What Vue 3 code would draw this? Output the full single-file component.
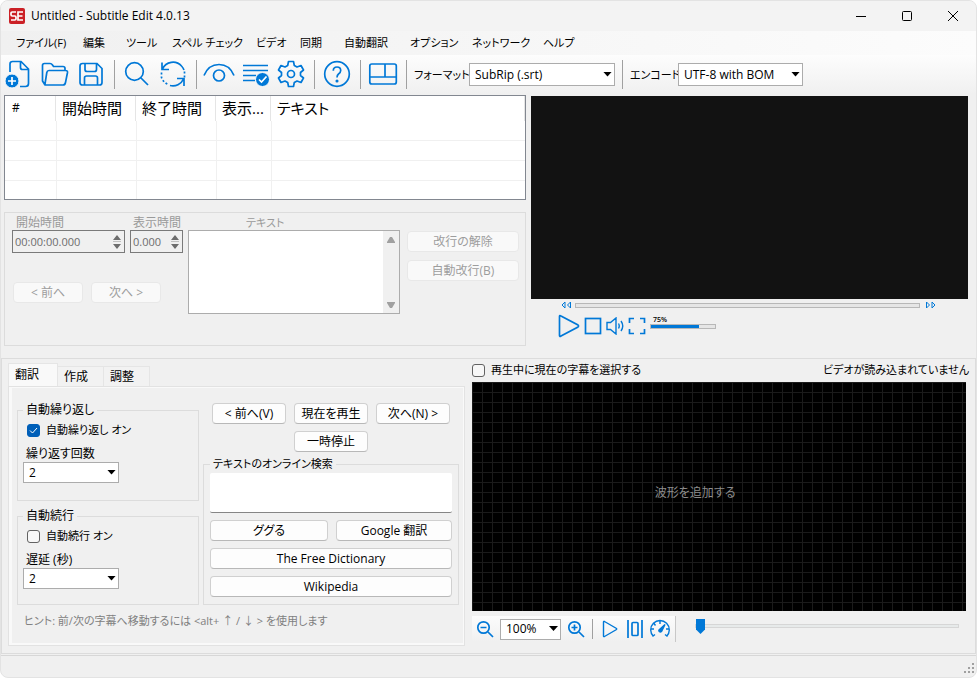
<script setup>
import { ref } from 'vue'

const menus = ['ファイル(F)', '編集', 'ツール', 'スペル チェック', 'ビデオ', '同期', '自動翻訳', 'オプション', 'ネットワーク', 'ヘルプ']
const columns = ['#', '開始時間', '終了時間', '表示...', 'テキスト']
const tabs = ['翻訳', '作成', '調整']
const activeTab = ref(0)
const format = ref('SubRip (.srt)')
const encoding = ref('UTF-8 with BOM')
const repeatOn = ref(true)
const continueOn = ref(false)
const selectWhilePlaying = ref(false)
const repeatCount = ref('2')
const delay = ref('2')
const zoom = ref('100%')
const volume = ref(75)
const seek = ref(0)
const wavePosition = ref(0)
const query = ref('')
</script>

<template>
  <div class="window">
    <header class="titlebar">
      <svg class="logo" width="16" height="16" viewBox="0 0 16 16" aria-hidden="true">
        <rect width="16" height="16" rx="2" fill="#cb2026" />
        <path d="M7 4H3.200Q2 4 2 5.200V6.800Q2 8 3.200 8H5.800Q7 8 7 9.200V10.800Q7 12 5.800 12H2M14 4H9V12H14M9 8H13.500" fill="none" stroke="#fff" stroke-width="1.700" />
      </svg>
      <h1>Untitled - Subtitle Edit 4.0.13</h1>
      <div class="caption-buttons">
        <button type="button" aria-label="最小化"><svg width="12" height="12" viewBox="0 0 12 12"><path d="M1 6.500H11" /></svg></button>
        <button type="button" aria-label="最大化"><svg width="12" height="12" viewBox="0 0 12 12"><rect x="1.500" y="1.500" width="9" height="9" rx="1" /></svg></button>
        <button type="button" aria-label="閉じる"><svg width="12" height="12" viewBox="0 0 12 12"><path d="M1 1L11 11M11 1L1 11" /></svg></button>
      </div>
    </header>

    <nav class="menubar">
      <button v-for="m in menus" :key="m" type="button">{{ m }}</button>
    </nav>

    <div class="toolbar">
      <button type="button" aria-label="新規">
        <svg class="ico" width="30" height="30" viewBox="0 0 30 30">
          <path d="M7 13V5Q7 2.500 9.500 2.500H18L25.500 10V24.500Q25.500 27.500 22.500 27.500H17M17.500 3V8.500Q17.500 10.500 19.500 10.500H25" />
          <circle cx="9" cy="22" r="7" class="solid edge" /><path d="M9 18V26M5 22H13" class="white" />
        </svg>
      </button>
      <button type="button" aria-label="開く">
        <svg class="ico" width="30" height="30" viewBox="0 0 30 30">
          <path d="M5 26L2.500 22V6.500Q2.500 4.500 4.500 4.500H10Q11.500 4.500 12.500 6L13.500 7.500H23Q25 7.500 25 9.500V11.500M5.500 26Q4.800 26 5 25L6.800 13.500Q7.200 11.500 9 11.500H25.500Q27.800 11.500 27.500 13.500L25.500 23.500Q25 26 23 26Z" />
        </svg>
      </button>
      <button type="button" aria-label="保存">
        <svg class="ico" width="30" height="30" viewBox="0 0 30 30">
          <path d="M6.500 4.500H21L26 9.500V23.500Q26 26 23.500 26H6.500Q4 26 4 23.500V7Q4 4.500 6.500 4.500ZM9 5V10.500Q9 12.500 11 12.500H18.500Q20.500 12.500 20.500 10.500V5M8.500 26V19Q8.500 17 10.500 17H19.500Q21.500 17 21.500 19V26" />
        </svg>
      </button>
      <span class="sep" />
      <button type="button" aria-label="検索">
        <svg class="ico" width="30" height="30" viewBox="0 0 30 30"><circle cx="12.500" cy="12.500" r="8.800" /><path d="M19 19L26 26" /></svg>
      </button>
      <button type="button" aria-label="置換">
        <svg class="ico" width="30" height="30" viewBox="0 0 30 30">
          <path d="M4.500 10A11.500 11.500 0 0 1 23.500 7Q25 8.500 26 11M4 3.500V10.500H11M25.500 20A11.500 11.500 0 0 1 12 26.500M26 27V19.500H19" />
          <path d="M26.500 12.500V18.500M3.500 13.500V18.500Q5 23 10 25.500" class="dots" />
        </svg>
      </button>
      <span class="sep" />
      <button type="button" aria-label="外観の比較">
        <svg class="ico" width="34" height="30" viewBox="0 0 34 30"><path d="M2 16.500Q6.500 5.500 17 5.500T32 16.500" /><circle cx="17" cy="16.500" r="5.500" /></svg>
      </button>
      <button type="button" aria-label="スペルチェック">
        <svg class="ico" width="30" height="30" viewBox="0 0 30 30">
          <path d="M3 6.500H28M3 11.500H28M3 16.500H16M3 21.500H15" /><circle cx="22.500" cy="20.500" r="7" class="solid edge" /><path d="M19 20.500L21.500 23L26.500 17.500" class="white" />
        </svg>
      </button>
      <button type="button" aria-label="設定">
        <svg class="ico" width="30" height="30" viewBox="0 0 30 30">
          <path d="M12.500 2.500H17.500L18.300 6.500L21 8L25 6.500L27.500 11L24.500 13.500V16.500L27.500 19L25 23.500L21 22L18.300 23.500L17.500 27.500H12.500L11.700 23.500L9 22L5 23.500L2.500 19L5.500 16.500V13.500L2.500 11L5 6.500L9 8L11.700 6.500Z" stroke-linejoin="round" /><circle cx="15" cy="15" r="3.500" />
        </svg>
      </button>
      <span class="sep" />
      <button type="button" aria-label="ヘルプ">
        <svg class="ico" width="30" height="30" viewBox="0 0 30 30"><circle cx="15" cy="15" r="12.300" /><path d="M11.300 11.700Q11.300 8 15 8T18.700 11.500Q18.700 13.500 16.500 15Q15 16.200 15 18.500" /><circle cx="15" cy="22" r="0.700" class="solid" /></svg>
      </button>
      <span class="sep" />
      <button type="button" aria-label="レイアウト">
        <svg class="ico" width="30" height="30" viewBox="0 0 30 30"><rect x="1.800" y="5" width="26.500" height="20" rx="2" /><path d="M2 18H28M17 5V18" /></svg>
      </button>
      <span class="sep" />
      <label class="tool-label" for="format">フォーマット</label>
      <span class="combo format"><select id="format" v-model="format"><option>SubRip (.srt)</option></select></span>
      <span class="sep" />
      <label class="tool-label enc" for="encoding">エンコード</label>
      <span class="combo encoding"><select id="encoding" v-model="encoding"><option>UTF-8 with BOM</option></select></span>
    </div>

    <main class="upper">
      <div class="editor">
        <div class="list">
          <table>
            <colgroup><col class="c-num" /><col class="c-time" /><col class="c-time" /><col class="c-dur" /><col /></colgroup>
            <thead><tr><th v-for="c in columns" :key="c" scope="col">{{ c }}</th></tr></thead>
            <tbody><tr v-for="r in 4" :key="r"><td v-for="c in columns" :key="c" /></tr></tbody>
          </table>
        </div>

        <section class="edit-panel">
          <div class="times">
            <div class="time-fields">
              <div class="field start">
                <label for="start">開始時間</label>
                <div class="spin"><input id="start" type="text" value="00:00:00.000" disabled /><svg width="8" height="14" viewBox="0 0 8 14"><path d="M0 5L4 0L8 5ZM0 9H8L4 14Z" /><path d="M0 6.500H8" class="line" /></svg></div>
              </div>
              <div class="field duration">
                <label for="duration">表示時間</label>
                <div class="spin"><input id="duration" type="text" value="0.000" disabled /><svg width="8" height="14" viewBox="0 0 8 14"><path d="M0 5L4 0L8 5ZM0 9H8L4 14Z" /><path d="M0 6.500H8" class="line" /></svg></div>
              </div>
            </div>
            <div class="step-buttons">
              <button class="btn" type="button" disabled>&lt; 前へ</button>
              <button class="btn" type="button" disabled>次へ &gt;</button>
            </div>
          </div>
          <div class="field text-field">
            <label for="text">テキスト</label>
            <div class="text-frame">
              <textarea id="text" disabled />
              <div class="scroll">
                <svg width="8" height="6" viewBox="0 0 8 6"><path d="M0 6V5L3 0H5L8 5V6Z" /></svg>
                <svg width="8" height="6" viewBox="0 0 8 6"><path d="M0 0V1L3 6H5L8 1V0Z" /></svg>
              </div>
            </div>
          </div>
          <div class="break-buttons">
            <button class="btn" type="button" disabled>改行の解除</button>
            <button class="btn" type="button" disabled>自動改行(B)</button>
          </div>
        </section>
      </div>

      <section class="player">
        <div class="screen" />
        <div class="seek-row">
          <button type="button" aria-label="戻る"><svg class="ico thin" width="11" height="8" viewBox="0 0 11 8"><path d="M4 1V7L1 4ZM9.500 1V7L6.500 4Z" /></svg></button>
          <input v-model="seek" class="bar" type="range" min="0" max="100" aria-label="再生位置" :style="{ '--fill': seek + '%' }" />
          <button type="button" aria-label="進む"><svg class="ico thin" width="11" height="8" viewBox="0 0 11 8"><path d="M1.500 1V7L4.500 4ZM7 1V7L10 4Z" /></svg></button>
        </div>
        <div class="play-row">
          <button type="button" aria-label="再生"><svg class="ico" width="22" height="24" viewBox="0 0 22 24"><path d="M1.500 2.500Q1.500 1 3 2L20 11Q21 12 20 13L3 22Q1.500 23 1.500 21.500Z" /></svg></button>
          <button type="button" aria-label="停止"><svg class="ico" width="18" height="18" viewBox="0 0 18 18"><rect x="1.500" y="1.500" width="15" height="15" /></svg></button>
          <button type="button" aria-label="ミュート"><svg class="ico slim" width="18" height="18" viewBox="0 0 18 18"><path d="M1 5.500H4.500L10 1V17L4.500 12.500H1ZM12.500 6.500Q14 9 12.500 11.500M15 4Q18.500 9 15 14" /></svg></button>
          <button type="button" aria-label="全画面"><svg class="ico" width="18" height="18" viewBox="0 0 18 18"><path d="M1.500 6V1.500H6M12 1.500H16.500V6M16.500 12V16.500H12M6 16.500H1.500V12" /></svg></button>
          <div class="volume">
            <label for="volume">{{ volume }}%</label>
            <input id="volume" v-model="volume" class="bar" type="range" min="0" max="100" :style="{ '--fill': volume + '%' }" />
          </div>
        </div>
      </section>
    </main>

    <section class="lower">
      <div class="tab-control">
        <div class="tabs" role="tablist">
          <button v-for="(t, i) in tabs" :key="t" type="button" role="tab" :aria-selected="i === activeTab" :class="{ active: i === activeTab }" @click="activeTab = i">{{ t }}</button>
        </div>
        <div class="tab-page">
          <div class="page-grid">
            <div class="auto-col">
              <fieldset>
                <legend>自動繰り返し</legend>
                <label class="check"><input v-model="repeatOn" type="checkbox" /><svg v-if="repeatOn" width="9" height="7" viewBox="0 0 9 7"><path d="M1 3.500L3.500 6L8 1" /></svg>自動繰り返し オン</label>
                <label class="above" for="repeat">繰り返す回数</label>
                <span class="combo small"><select id="repeat" v-model="repeatCount"><option>2</option></select></span>
              </fieldset>
              <fieldset class="continue">
                <legend>自動続行</legend>
                <label class="check"><input v-model="continueOn" type="checkbox" />自動続行 オン</label>
                <label class="above" for="delay">遅延 (秒)</label>
                <span class="combo small"><select id="delay" v-model="delay"><option>2</option></select></span>
              </fieldset>
            </div>
            <div class="action-col">
              <div class="play-buttons">
                <button class="btn" type="button">&lt; 前へ(V)</button>
                <button class="btn" type="button">現在を再生</button>
                <button class="btn" type="button">次へ(N) &gt;</button>
                <button class="btn pause" type="button">一時停止</button>
              </div>
              <fieldset class="search">
                <legend>テキストのオンライン検索</legend>
                <textarea v-model="query" aria-label="検索する語句" />
                <div class="search-buttons">
                  <button class="btn" type="button">ググる</button>
                  <button class="btn" type="button">Google 翻訳</button>
                  <button class="btn wide" type="button">The Free Dictionary</button>
                  <button class="btn wide" type="button">Wikipedia</button>
                </div>
              </fieldset>
            </div>
          </div>
          <p class="hint">ヒント: 前/次の字幕へ移動するには &lt;alt+ ↑ / ↓ &gt; を使用します</p>
        </div>
      </div>

      <div class="wave-area">
        <div class="wave-head">
          <label class="check"><input v-model="selectWhilePlaying" type="checkbox" />再生中に現在の字幕を選択する</label>
          <span>ビデオが読み込まれていません</span>
        </div>
        <div class="waveform"><span>波形を追加する</span></div>
        <div class="wave-foot">
          <div class="wave-tools">
            <button type="button" aria-label="縮小"><svg class="ico" width="18" height="18" viewBox="0 0 18 18"><circle cx="7.500" cy="7.500" r="5.700" /><path d="M12 12L17 17M4.500 7.500H10.500" /></svg></button>
            <span class="combo zoom"><select v-model="zoom" aria-label="拡大率"><option>100%</option></select></span>
            <button type="button" aria-label="拡大"><svg class="ico" width="18" height="18" viewBox="0 0 18 18"><circle cx="7.500" cy="7.500" r="5.700" /><path d="M12 12L17 17M4.500 7.500H10.500M7.500 4.500V10.500" /></svg></button>
            <span class="sep" />
            <button type="button" aria-label="再生"><svg class="ico slim" width="18" height="18" viewBox="0 0 18 18"><path d="M2.500 2Q2.500 1 3.500 1.500L15.500 8.500Q16 9 15.500 9.500L3.500 16.500Q2.500 17 2.500 16Z" /></svg></button>
            <button type="button" aria-label="中央に固定"><svg class="ico" width="18" height="20" viewBox="0 0 18 20"><path d="M2 1V19M16 1V19" /><rect x="6" y="3.500" width="6" height="13" rx="1" /></svg></button>
            <button type="button" aria-label="再生速度"><svg class="ico slim" width="22" height="20" viewBox="0 0 22 20"><path d="M4.500 17.500A9.300 9.300 0 1 1 17.500 17.500M11 2V5M5 4.500L6.500 6.500M2 10H5M17 10H20M3.500 17.500L6 15.500M18.500 17.500L16 15.500" /><path d="M16 5.500L12.500 12.500Q11.500 13.500 10.500 12.800Q9.300 11.700 10.200 10.800Z" class="solid" /></svg></button>
          </div>
          <input v-model="wavePosition" class="position" type="range" min="0" max="100" aria-label="波形の位置" />
        </div>
      </div>
    </section>

    <footer class="statusbar">
      <svg width="11" height="11" viewBox="0 0 11 11" aria-hidden="true"><path d="M8 0h2v2h-2zM8 4h2v2h-2zM8 8h2v2h-2zM4 4h2v2h-2zM4 8h2v2h-2zM0 8h2v2h-2z" fill="#a0a0a0" /></svg>
    </footer>
  </div>
</template>

<style>
body {
  margin: 0;
  background: #fff;
}
</style>

<style scoped>
* {
  box-sizing: border-box;
}

.window {
  display: flex;
  flex-direction: column;
  min-height: 100vh;
  overflow: hidden;
  border: 1px solid #e3e3e3;
  border-radius: 8px;
  background: #f0f0f0;
  color: #000;
  font: 12px/16px "Open Sans", "Noto Sans CJK JP", sans-serif;
  font-feature-settings: "palt";
}

button,
input,
select,
textarea {
  margin: 0;
  padding: 0;
  border: 0;
  background: none;
  color: inherit;
  font: inherit;
  font-feature-settings: inherit;
}

button {
  display: flex;
  align-items: center;
  justify-content: center;
  white-space: nowrap;
}

label,
legend {
  white-space: nowrap;
}

.ico {
  flex: none;
  fill: none;
  stroke: #0078d7;
  stroke-width: 1.7;
}

.ico.slim {
  stroke-width: 1.4;
}

.ico.thin {
  stroke-width: 1;
}

.ico .solid {
  fill: #0078d7;
}

.ico .edge {
  stroke: #fafafa;
  stroke-width: 1;
}

.ico .white {
  stroke: #fff;
}

.ico .dots {
  stroke-dasharray: 2 2;
}

/* title and menu */
.titlebar {
  display: flex;
  align-items: center;
  height: 30px;
  padding-left: 8px;
  background: #f3f3f3;
}

.titlebar h1 {
  margin: 0 0 0 6px;
  font-size: 12px;
  font-weight: 400;
}

.caption-buttons {
  display: flex;
  margin-left: auto;
}

.caption-buttons button {
  width: 46px;
  height: 30px;
}

.caption-buttons svg {
  fill: none;
  stroke: #000;
}

.menubar {
  display: grid;
  grid-template-columns: 67px 43px 46px 84px 44px 44px 66px 62px 71px auto;
  height: 24px;
  padding-left: 15px;
  background: linear-gradient(to right, #f0f0f0, #fcfcfc);
  font-size: 11px;
}

.menubar button {
  justify-content: flex-start;
}

/* toolbar */
.toolbar {
  display: flex;
  align-items: center;
  height: 39px;
  background: linear-gradient(#fdfdfd, #f0f0f0);
}

.toolbar button {
  flex: none;
  width: 36px;
  height: 36px;
  padding-bottom: 2px;
}

.toolbar button:first-child {
  width: 34px;
  margin-right: 2px;
}

.sep {
  flex: none;
  width: 1px;
  height: 29px;
  margin: 0 4px 0 5px;
  background: #a0a0a0;
}

.tool-label {
  width: 58px;
  padding-left: 3px;
  font-size: 11px;
}

.tool-label.enc {
  width: 51px;
}

.combo {
  position: relative;
  display: block;
  flex: none;
}

.combo::after {
  position: absolute;
  top: 50%;
  right: 3px;
  width: 9px;
  height: 5px;
  margin-top: -3px;
  background: #000;
  clip-path: polygon(0 0, 100% 0, 50% 100%);
  content: "";
  pointer-events: none;
}

.combo select {
  display: block;
  width: 100%;
  height: 23px;
  padding-left: 5px;
  border: 1px solid #acacac;
  border-radius: 0;
  background: #fff;
  appearance: none;
}

.combo.format {
  width: 146px;
  margin-right: 2px;
}

.combo.encoding {
  width: 125px;
}

/* upper half */
.upper {
  display: grid;
  grid-template-columns: minmax(0, 522fr) minmax(0, 437fr);
  column-gap: 5px;
  padding: 1px 8px 12px 3px;
}

.list {
  height: 105px;
  overflow: hidden;
  border: 1px solid #828790;
  background: #fff;
}

.list table {
  width: 100%;
  border-collapse: separate;
  border-spacing: 0;
  table-layout: fixed;
}

.c-num {
  width: 51px;
}

.c-time {
  width: 80px;
}

.c-dur {
  width: 55px;
}

.list th {
  height: 25px;
  padding: 0 6px 2px;
  border-right: 1px solid #e5e5e5;
  font-size: 15px;
  font-weight: 400;
  line-height: 20px;
  text-align: left;
  white-space: nowrap;
}

.list th:first-child {
  padding-left: 7px;
  font-size: 12px;
}

.list td {
  height: 20px;
  padding: 0;
  border-bottom: 1px solid #f0f0f0;
}

.list td + td {
  border-left: 1px solid #f0f0f0;
}

.edit-panel {
  display: flex;
  height: 134px;
  margin-top: 12px;
  padding: 2px 6px 0 7px;
  border: 1px solid #dcdcdc;
  color: #9a9a9a;
}

.field label {
  display: block;
  height: 15px;
  padding-left: 4px;
}

.time-fields {
  display: flex;
  gap: 5px;
}

.field.start {
  width: 113px;
}

.field.duration {
  width: 53px;
}

.field.duration label {
  padding-left: 3px;
}

.spin {
  display: flex;
  align-items: center;
  height: 23px;
  padding: 0 3px 0 2px;
  border: 1px solid #7a7a7a;
  color: #6d6d6d;
  font-size: 11px;
}

.spin input {
  flex: 1;
  min-width: 0;
}

.spin svg {
  flex: none;
  fill: #6d6d6d;
}

.spin .line {
  stroke: #c0c0c0;
}

.step-buttons {
  display: flex;
  gap: 8px;
  margin-top: 29px;
  padding-left: 1px;
}

.step-buttons .btn {
  width: 70px;
}

.text-field {
  flex: 1;
  min-width: 0;
  margin-left: 5px;
}

.text-field label {
  padding-left: 58px;
  font-size: 11px;
}

.text-frame {
  display: flex;
  height: 84px;
  border: 1px solid #acacac;
  background: #fff;
}

.text-frame textarea {
  flex: 1;
  min-width: 0;
  resize: none;
}

.scroll {
  display: flex;
  flex-direction: column;
  align-items: center;
  justify-content: space-between;
  width: 16px;
  padding: 6px 0 5px;
  background: #f0f0f0;
}

.scroll svg {
  fill: #a0a0a0;
}

.break-buttons {
  display: flex;
  flex-direction: column;
  gap: 8px;
  width: 112px;
  margin: 16px 0 0 7px;
}

.btn {
  height: 21px;
  border: 1px solid #d0d0d0;
  border-bottom-color: #b8b8b8;
  border-radius: 4px;
  background: #fdfdfd;
}

.btn:disabled {
  border-color: #e8e8e8;
  background: #f9f9f9;
  color: #9d9d9d;
}

/* player */
.player {
  display: flex;
  flex-direction: column;
}

.screen {
  flex: none;
  height: 203px;
  margin-top: 1px;
  background: #121212;
}

.bar {
  height: 5px;
  border: 1px solid #b8b8b8;
  background: linear-gradient(to right, #0078d7 var(--fill), #e6e6e6 var(--fill));
  appearance: none;
}

.bar::-webkit-slider-thumb {
  width: 1px;
  height: 3px;
  opacity: 0;
  appearance: none;
}

.seek-row {
  display: flex;
  align-items: center;
  gap: 3px;
  height: 12px;
  padding: 0 32px 0 30px;
}

.seek-row .bar {
  flex: 1;
  min-width: 0;
  margin-right: 2px;
}

.play-row {
  display: flex;
  align-items: center;
  gap: 4px;
  height: 29px;
  padding-left: 27px;
}

.volume {
  display: flex;
  flex-direction: column;
  width: 66px;
  padding-bottom: 8px;
}

.volume label {
  padding-left: 3px;
  font-size: 7px;
  font-weight: 600;
  line-height: 9px;
}

.volume .bar {
  width: 100%;
}

/* lower half */
.lower {
  display: flex;
  flex: 1;
  gap: 7px;
  padding: 4px 9px 7px 6px;
  border: 1px solid #dcdcdc;
}

.tab-control {
  display: flex;
  flex: none;
  flex-direction: column;
  width: 457px;
}

.tabs {
  display: flex;
  align-items: flex-end;
  height: 23px;
}

.tabs button {
  justify-content: flex-start;
  width: 46px;
  height: 20px;
  padding-left: 6px;
  border: 1px solid #e5e5e5;
  border-width: 1px 1px 0 0;
  background: #f2f2f2;
}

.tabs .active {
  width: 50px;
  height: 23px;
  padding-bottom: 1px;
  border-left-width: 1px;
  background: #f9f9f9;
}

.tab-page {
  flex: 1;
  padding: 14px 5px 4px;
  border: 1px solid #e2e2e2;
  box-shadow: inset 3px -2px #f9f9f9, inset -1px 1px #f9f9f9;
}

.page-grid {
  display: grid;
  grid-template-columns: 182px 256px;
  gap: 4px;
  padding-left: 3px;
}

.auto-col {
  display: flex;
  flex-direction: column;
  gap: 6px;
}

fieldset {
  min-width: 0;
  height: 100px;
  margin: 0;
  padding: 0 5px;
  border: 1px solid #dcdcdc;
}

fieldset.continue {
  height: 98px;
}

legend {
  height: 18px;
  padding: 0 3px;
  line-height: 18px;
}

.check {
  display: flex;
  position: relative;
  align-items: center;
  height: 22px;
  padding-left: 4px;
  font-size: 11px;
}

.check input {
  flex: none;
  width: 13px;
  height: 13px;
  margin-right: 6px;
  border: 1px solid #626262;
  border-radius: 3px;
  background: #f7f7f7;
  appearance: none;
}

.check input:checked {
  border-color: #005fb8;
  background: #005fb8;
}

.check svg {
  position: absolute;
  top: 8px;
  left: 6px;
  fill: none;
  stroke: #fff;
}

.above {
  display: block;
  height: 21px;
  padding: 5px 0 0 3px;
  line-height: 16px;
}

.combo.small {
  width: 96px;
}

.combo.small select,
.combo.zoom select {
  height: 21px;
}

.action-col {
  display: flex;
  flex-direction: column;
}

.play-buttons {
  display: grid;
  grid-template-columns: repeat(3, 74px);
  align-content: start;
  gap: 7px 8px;
  height: 54px;
  padding: 2px 8px 0 9px;
}

.play-buttons .pause {
  grid-column: 2;
}

.search {
  flex: 1;
  padding: 0 6px;
}

.search legend {
  font-size: 11px;
}

.search textarea {
  display: block;
  width: 100%;
  height: 40px;
  border-bottom: 1px solid #868686;
  border-radius: 2px;
  background: #fff;
  resize: none;
}

.search-buttons {
  display: grid;
  grid-template-columns: 118px 1fr;
  gap: 7px 8px;
  margin-top: 7px;
}

.search-buttons .wide {
  grid-column: 1 / -1;
}

.hint {
  margin: 8px 0 0 10px;
  color: #808080;
  font-size: 11px;
  white-space: nowrap;
}

/* waveform */
.wave-area {
  display: flex;
  flex: 1;
  flex-direction: column;
  min-width: 0;
}

.wave-head {
  display: flex;
  justify-content: space-between;
  height: 19px;
  margin-right: -3px;
  font-size: 11px;
  line-height: 14px;
}

.wave-head .check {
  height: 14px;
  padding-left: 0;
}

.waveform {
  display: flex;
  flex: 1;
  align-items: center;
  padding: 0 0 8px 37%;
  background:
    linear-gradient(to right, #1b1b1b 1px, transparent 1px) 0 0 / 10px 10px,
    linear-gradient(#1b1b1b 1px, transparent 1px) 0 0 / 10px 10px,
    #000;
  color: #8c8c8c;
}

.wave-foot {
  display: flex;
  align-items: flex-start;
  height: 35px;
  padding: 5px 7px 0 0;
}

.wave-tools {
  display: flex;
  flex: none;
  align-items: center;
  width: 204px;
  height: 26px;
  padding-left: 4px;
  border-right: 1px solid #c8c8c8;
  background: linear-gradient(#fcfcfc, #f0f0f0);
}

.wave-tools button {
  width: 25px;
}

.wave-tools button:first-child {
  width: 18px;
}

.wave-tools .combo {
  margin: 0 2px 0 6px;
}

.wave-tools .sep {
  height: 20px;
  margin: 0 4px;
}

.combo.zoom {
  width: 61px;
}

.position {
  flex: 1;
  min-width: 0;
  height: 20px;
  margin-left: 19px;
  appearance: none;
}

.position::-webkit-slider-runnable-track {
  height: 4px;
  border: 1px solid #d6d6d6;
  background: #e7eaea;
}

.position::-webkit-slider-thumb {
  width: 9px;
  height: 15px;
  margin-top: -6px;
  background: #0078d7;
  clip-path: polygon(0 0, 100% 0, 100% 70%, 50% 100%, 0 70%);
  appearance: none;
}

.statusbar {
  display: flex;
  align-items: flex-end;
  justify-content: flex-end;
  height: 22px;
  margin-top: 1px;
  padding: 0 1px 3px;
  border-top: 1px solid #d7d7d7;
}
</style>
